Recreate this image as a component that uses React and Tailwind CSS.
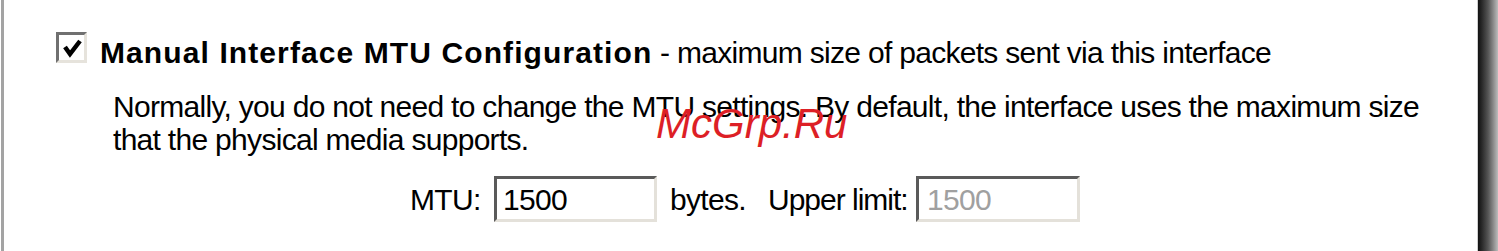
export default function App() {
  return (
    <div
      className="relative flex h-[251px] w-[1498px] overflow-hidden bg-white text-black"
      style={{ fontFamily: '"Liberation Sans", Arial, sans-serif' }}
    >
      {/* left frame edge */}
      <div className="ml-[1px] h-full w-[3px] bg-[#a3a3a3]" />

      <div className="flex flex-1 flex-col pl-[52px] pt-[32px]">
        {/* heading row */}
        <div className="flex items-start">
          <div className="flex h-[31px] w-[31px] items-center justify-center border-[3px] border-t-[#707070] border-l-[#707070] border-r-[#e6e3dc] border-b-[#e6e3dc] bg-white">
            <svg width="25" height="25" viewBox="0 0 25 25">
              <path d="M6 12 L11 19 L21 6" fill="none" stroke="#000" strokeWidth="4.5" strokeLinejoin="miter" />
            </svg>
          </div>
          <p className="ml-[13px] mt-[4px] whitespace-nowrap text-[30px] leading-[33px] tracking-[-0.7px]">
            <span className="font-bold tracking-[1.1px]">Manual Interface MTU Configuration</span>
            <span> - maximum size of packets sent via this interface</span>
          </p>
        </div>

        {/* description */}
        <p className="ml-[57px] mt-[21px] whitespace-nowrap text-[30px] leading-[33px] tracking-[-0.7px]">
          Normally, you do not need to change the MTU settings. By default, the interface uses the maximum size
          <br />
          that the physical media supports.
        </p>

        {/* MTU row */}
        <div className="mt-[20px] flex h-[46px] items-center whitespace-nowrap text-[30px] leading-[33px] tracking-[-0.7px]">
          <span className="ml-[354px] w-[84px]">MTU:</span>
          <div className="flex h-[46px] w-[163px] items-center border-[3px] border-t-[#5a5a5a] border-l-[#5a5a5a] border-r-[#e4e1da] border-b-[#e4e1da] bg-white pl-[6px]">
            1500
          </div>
          <span className="ml-[13px] w-[98px]">bytes.</span>
          <span className="w-[148px] tracking-[-1px]">Upper limit:</span>
          <div className="flex h-[46px] w-[164px] items-center border-[3px] border-t-[#5a5a5a] border-l-[#5a5a5a] border-r-[#e4e1da] border-b-[#e4e1da] bg-white pl-[8px] text-[#a0a0a0]">
            1500
          </div>
        </div>
      </div>

      {/* right frame shadow */}
      <div className="h-full w-[1px] bg-[#cfcfcf]" />
      <div className="h-full w-[20px] bg-gradient-to-r from-[#111] via-[#555] to-[#bdbdbd]" />

      {/* watermark */}
      <span className="absolute left-[656px] top-[100px] text-[42px] italic leading-[48px] text-[#dd1f26]">
        McGrp.Ru
      </span>
    </div>
  );
}
